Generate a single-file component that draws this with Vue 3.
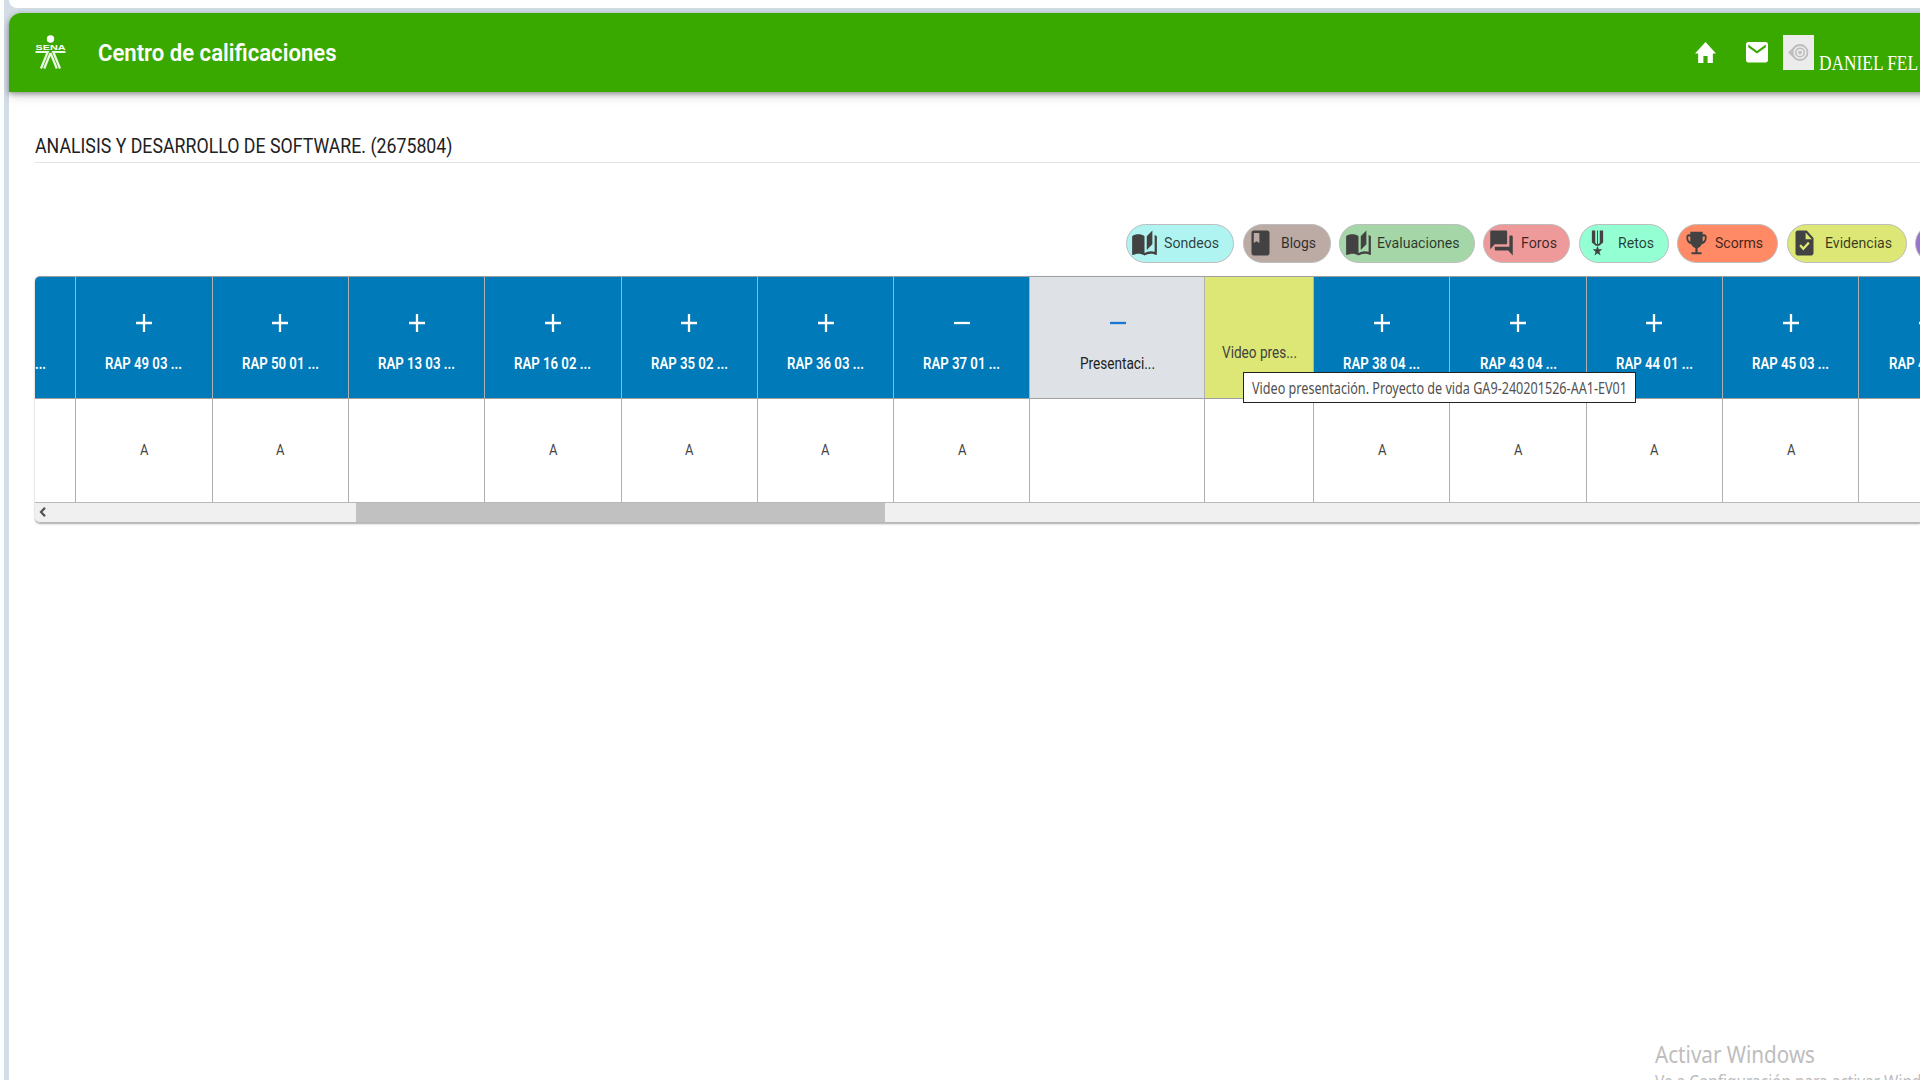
<script setup>
// Scales a single line of text horizontally to a given width
const vFit = (el, { value }) => {
  el.style.transform = 'none'
  const natural = el.getBoundingClientRect().width
  el.style.transform = `scaleX(${value / natural})`
  el.style.marginRight = `${value - natural}px`
}

const bookOpen = 'M19,2L14,6.5V17.5L19,13V2M6.5,5C4.55,5 2.45,5.4 1,6.5V21.16C1,21.41 1.25,21.66 1.5,21.66C1.6,21.66 1.65,21.59 1.75,21.59C3.1,20.94 5.05,20.5 6.5,20.5C8.45,20.5 10.55,20.9 12,22C13.35,21.15 15.8,20.5 17.5,20.5C19.15,20.5 20.85,20.81 22.25,21.56C22.35,21.61 22.4,21.59 22.5,21.59C22.75,21.59 23,21.34 23,21.09V6.5C22.4,6.05 21.75,5.75 21,5.5V19C19.9,18.65 18.7,18.5 17.5,18.5C15.8,18.5 13.35,19.15 12,20V6.5C10.55,5.4 8.45,5 6.5,5Z'

const chips = [
  { label: 'Sondeos', color: '#aff4f0', width: 108, icon: bookOpen, pad: 4, gap: 6, text: 55 },
  { label: 'Blogs', color: '#bcaaa4', width: 88, icon: 'M18 2H6c-1.1 0-2 .9-2 2v16c0 1.1.9 2 2 2h12c1.1 0 2-.9 2-2V4c0-1.1-.9-2-2-2zM6 4h5v8l-2.500-1.500L6 12V4z', pad: 3.5, gap: 6.5, text: 35 },
  { label: 'Evaluaciones', color: '#a5d6a7', width: 135.5, icon: bookOpen, pad: 4.5, gap: 5.5, text: 82.5 },
  { label: 'Foros', color: '#ef9a9a', width: 87, icon: 'M21 6h-2v9H6v2c0 .55.45 1 1 1h11l4 4V7c0-.55-.45-1-1-1zm-4 6V3c0-.55-.45-1-1-1H3c-.55 0-1 .45-1 1v14l4-4h10c.55 0 1-.45 1-1z', pad: 4, gap: 6, text: 36 },
  { label: 'Retos', color: '#93ffd2', width: 90, icon: 'M7 2H17V11.500L13.500 14.200H10.500L7 11.500ZM10 2V12L11.600 13V2ZM12.400 2V13L14 12V2ZM12 14.200L13.100 17H16.200L13.700 18.900L14.700 22L12 20.100L9.300 22L10.300 18.900L7.800 17H10.900Z', pad: 4, gap: 7, text: 36 },
  { label: 'Scorms', color: '#ff8a65', width: 101, icon: 'M19 5h-1.500V3H6.500v2H5c-1.100 0-2 .9-2 2v1c0 2.550 1.920 4.630 4.390 4.940.63 1.500 1.980 2.630 3.610 2.960V19.400H7.500V21h9v-1.600h-3.500v-3.500c1.630-.33 2.980-1.460 3.610-2.960C19.080 12.630 21 10.550 21 8V7c0-1.100-.9-2-2-2zM4.600 8V6.700h1.900v4.100C5.400 10.400 4.600 9.300 4.600 8zm14.800 0c0 1.300-.8 2.400-1.900 2.800V6.700h1.900v1.300z', pad: 4.5, gap: 5.5, text: 48 },
  { label: 'Evidencias', color: '#dce775', width: 119.5, icon: 'M14 2H6c-1.100 0-2 .9-2 2v16c0 1.100.9 2 2 2h12c1.100 0 2-.9 2-2V8l-6-6zm-3.060 16L7.400 14.460l1.410-1.410 2.120 2.120 4.240-4.240 1.410 1.410L10.940 18zM13 9V3.500L18.500 9H13z', pad: 3, gap: 6.5, text: 67 },
]

const rap = (label, grade = 'A', sign = '+') => ({ label, grade, sign, kind: 'rap', width: 136.32, text: 77 })
const columns = [
  { label: '...', grade: '', sign: '', kind: 'rap first', width: 41.3, text: 11 },
  rap('RAP 49 03 ...'), rap('RAP 50 01 ...'), rap('RAP 13 03 ...', ''), rap('RAP 16 02 ...'),
  rap('RAP 35 02 ...'), rap('RAP 36 03 ...'), rap('RAP 37 01 ...', 'A', '-'),
  { label: 'Presentaci...', grade: '', sign: '-', kind: 'phase', width: 174.5, text: 75 },
  { label: 'Video pres...', grade: '', sign: '', kind: 'evidence', width: 109.2, text: 75 },
  rap('RAP 38 04 ...'), rap('RAP 43 04 ...'), rap('RAP 44 01 ...'), rap('RAP 45 03 ...'), rap('RAP 46 02 ...', ''),
]
</script>

<template>
  <div class="page">
    <div class="top-strip"><div class="top-panel"></div></div>
    <main class="window">
      <header class="bar">
        <svg class="logo" viewBox="0 0 30 35" fill="none" stroke="#fff">
          <circle cx="15" cy="4" r="3.700" fill="#fff" stroke="none" />
          <text x="0" y="14.500" textLength="30" lengthAdjust="spacingAndGlyphs" class="logo-text">SENA</text>
          <path d="M0 17H12.200L5.500 33.500M30 17H17.800L24.500 33.500M15 18L8.700 33.500M15 18L21.300 33.500" stroke-width="2.200" stroke-opacity=".9" />
        </svg>
        <h1><span v-fit="238.5" class="fit">Centro de calificaciones</span></h1>
        <div class="actions">
          <svg class="home" viewBox="2 3 20 17" preserveAspectRatio="none" fill="#fff"><path d="M10 20v-6h4v6h5v-8h3L12 3 2 12h3v8z" /></svg>
          <svg class="mail" viewBox="2 4 20 16" preserveAspectRatio="none" fill="#fff"><path d="M20 4H4c-1.100 0-2 .9-2 2v12c0 1.100.9 2 2 2h16c1.100 0 2-.9 2-2V6c0-1.100-.9-2-2-2zm0 4l-8 5-8-5V6l8 5 8-5v2z" /></svg>
          <svg class="avatar" viewBox="0 0 31 35" preserveAspectRatio="none">
            <rect width="31" height="35" fill="#ececec" />
            <path d="M5 17.500L13 10V25Z" fill="#bdbdbd" />
            <circle cx="17" cy="17.500" r="7.500" fill="#ececec" stroke="#bdbdbd" stroke-width="1.800" />
            <circle cx="17" cy="17.500" r="4.300" fill="none" stroke="#bdbdbd" stroke-width="1.600" />
            <circle cx="17" cy="17.500" r="1.800" fill="#bdbdbd" />
          </svg>
          <span class="user"><span v-fit="99" class="fit">DANIEL FEL</span></span>
        </div>
      </header>

      <h2><span v-fit="417.5" class="fit">ANALISIS Y DESARROLLO DE SOFTWARE. (2675804)</span></h2>

      <div class="legend">
        <div v-for="c in chips" :key="c.label" class="chip" :style="{ width: c.width + 'px', background: c.color, paddingLeft: c.pad + 'px' }">
          <svg viewBox="0 0 24 24" preserveAspectRatio="none" fill="#424242" :style="{ marginRight: c.gap + 'px' }"><path fill-rule="evenodd" :d="c.icon" /></svg>
          <span v-fit="c.text" class="fit">{{ c.label }}</span>
        </div>
        <div class="chip more"></div>
      </div>

      <section class="grid">
        <div class="row">
          <div v-for="c in columns" :key="c.label" class="cell head" :class="c.kind" :style="{ width: c.width + 'px' }">
            <svg v-if="c.sign" class="sign" viewBox="0 0 16 18" stroke="currentColor" stroke-width="2.300">
              <path :d="c.sign === '+' ? 'M0 9H16M8 0V18' : 'M0 9H16'" />
            </svg>
            <span v-fit="c.text" class="fit">{{ c.label }}</span>
          </div>
        </div>
        <div class="row">
          <div v-for="c in columns" :key="c.label" class="cell grade" :style="{ width: c.width + 'px' }">
            <span v-if="c.grade" v-fit="8.5" class="fit">{{ c.grade }}</span>
          </div>
        </div>
        <div class="scrollbar">
          <svg viewBox="0 0 7 10" fill="none" stroke="#505050" stroke-width="2.200"><path d="M6 .8L2 5L6 9.200" /></svg>
          <div class="thumb"></div>
        </div>
        <div class="tooltip"><span v-fit="375" class="fit">Video presentación. Proyecto de vida GA9-240201526-AA1-EV01</span></div>
      </section>
    </main>
    <div class="watermark">
      <p class="wm-title"><span v-fit="160" class="fit">Activar Windows</span></p>
      <p class="wm-text"><span v-fit="299" class="fit">Ve a Configuración para activar Windows.</span></p>
    </div>
  </div>
</template>

<style>
body { margin: 0; overflow: hidden; }
</style>

<style scoped>
* { box-sizing: border-box; }
.page {
  position: relative;
  width: 1920px;
  height: 1080px;
  overflow: hidden;
  background: #d2dde6;
  border-left: 4px solid #fcfdfd;
  padding-left: 5px;
  font-family: Roboto, sans-serif;
  display: flex;
  flex-direction: column;
}
.fit { display: inline-block; white-space: nowrap; transform-origin: 0 50%; flex: none; }
.top-strip { height: 13px; flex: none; }
.top-panel { height: 8px; background: #fff; border-bottom-left-radius: 8px; }
.window { flex: 1; background: #fff; border-top-left-radius: 12px; min-height: 0; }
.bar {
  height: 79px;
  margin-right: -20px;
  padding: 0 20px 0 26px;
  background: #39a900;
  border-top-left-radius: 12px;
  box-shadow: 0 2px 5px rgba(0, 0, 0, .35), 0 4px 12px rgba(0, 0, 0, .14);
  display: flex;
  color: #fff;
}
.logo { width: 31px; height: 35px; margin-top: 22px; flex: none; }
.logo-text { font: bold 8px "Liberation Sans", sans-serif; fill: #fff; stroke: none; }
h1 { margin: 24px 0 0 32px; font-size: 24px; line-height: 32px; font-weight: 600; width: 240px; }
.actions { margin-left: auto; display: flex; width: 225.500px; flex: none; overflow: hidden; }
.home { width: 21px; height: 21.500px; margin-top: 28.500px; flex: none; }
.mail { width: 22px; height: 20.500px; margin: 29px 0 0 30.500px; flex: none; }
.avatar { width: 31px; height: 35px; margin: 22px 0 0 15px; flex: none; }
.user { margin: 38px 0 0 5px; font: 20px/24px "Liberation Serif", serif; white-space: nowrap; }
h2 {
  margin: 32px 0 0 26px;
  height: 39px;
  border-bottom: 1px solid #e3e3e3;
  font-size: 20.500px;
  line-height: 44px;
  font-weight: 400;
  color: #212121;
}
.legend { display: flex; gap: 8.600px; margin: 60.500px 0 0 1117px; height: 39.500px; overflow: hidden; }
.chip { flex: none; display: flex; align-items: center; height: 39.500px; border: 1px solid #bdbdbd; border-radius: 20px; font-size: 15.500px; color: rgba(0, 0, 0, .75); }
.chip svg { width: 27px; height: 30px; flex: none; }
.more { width: 90px; background: #9575cd; }
.grid { position: relative; margin: 12.500px 0 0 26px; width: 1885px; height: 247px; border-radius: 5px 0 0 5px; box-shadow: 0 1px 2px rgba(0, 0, 0, .35); }
.row { display: flex; overflow: hidden; }
.cell { flex: none; border-right: 1px solid #b0b0b0; display: flex; flex-direction: column; align-items: center; }
.head { height: 123px; border-top: 1px solid #a0a0a0; border-bottom: 1px solid #a0a0a0; font-size: 16px; line-height: 20px; }
.rap { background: #007ab8; color: #fff; font-weight: 600; }
.first { border-top-left-radius: 5px; align-items: flex-start; padding: 77px 0 0; }
.phase { background: #dee1e6; color: #212121; }
.phase .sign { color: #1976d2; margin-left: 1px; }
.evidence { background: #dde776; color: #424242; padding-top: 66px; }
.sign { width: 16px; height: 18px; margin: 37px 0 22px; }
.grade { height: 104.500px; border-bottom: 1px solid #b8b8b8; justify-content: center; color: #444; font-size: 15px; }
.scrollbar { height: 19.500px; background: #f0f0f0; border-bottom: 1px solid #b8b8b8; border-bottom-left-radius: 5px; display: flex; align-items: center; padding-left: 4px; }
.scrollbar svg { width: 7px; height: 10px; }
.thumb { width: 529px; height: 100%; background: #c1c1c1; margin-left: 309.500px; }
.tooltip { position: absolute; left: 1208px; top: 96.500px; width: 393px; height: 31px; border: 1px solid #222; background: #fff; padding-left: 8px; font: 15.500px/31px "Noto Sans", sans-serif; color: #505050; }
.watermark { position: absolute; left: 1651px; top: 1036px; width: 265px; color: #bdbdbd; font-family: "Noto Sans", sans-serif; }
.watermark p { margin: 0; white-space: nowrap; }
.wm-title { font-size: 24px; line-height: 36px; }
.wm-text { font-size: 18px; line-height: 19px; }
</style>
